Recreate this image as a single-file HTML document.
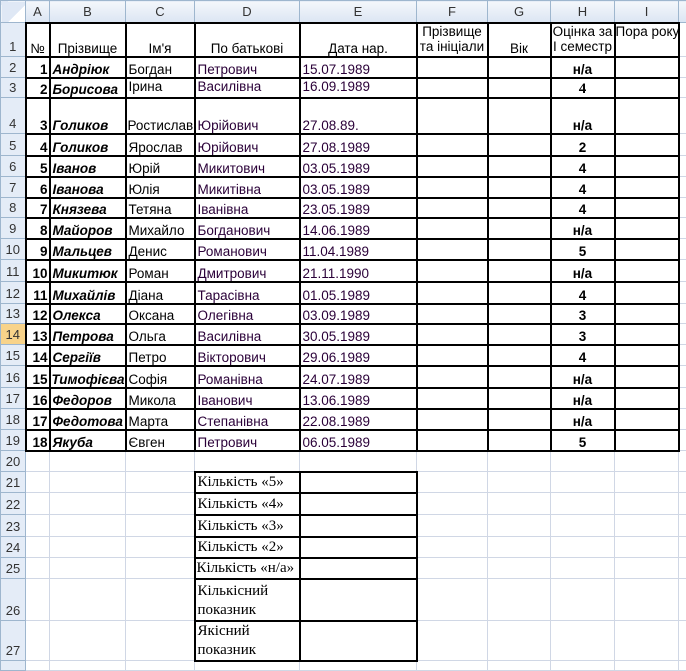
<!DOCTYPE html>
<html><head><meta charset="utf-8">
<style>
html,body{margin:0;padding:0;background:#fff;width:686px;height:664px;overflow:hidden}
table{border-collapse:collapse;table-layout:fixed;width:698px;font-family:"Liberation Sans",Arial,sans-serif;font-size:13.5px;color:#000;position:absolute;left:0;top:0}
td{border:1px solid #d0d7e5;padding:0 2px;white-space:nowrap;overflow:hidden;vertical-align:bottom;line-height:15px}
.ch{background:linear-gradient(#f4f7fb,#dbe5f3);border:1px solid #9eb6ce;text-align:center;vertical-align:middle;color:#333;font-size:13px}
.rh{background:#e4ecf7;border:1px solid #9eb6ce;text-align:center;color:#333;vertical-align:bottom;padding:0 0 2px 0;font-size:13px}
.sel{background:#f8d38a;color:#333}
.t{border:2px solid #000}
.n{text-align:right;font-weight:bold;font-size:13.5px;padding-right:1px}
.s{font-weight:bold;font-style:italic;font-size:13.5px}
.d{color:#2a0038}
.c{text-align:center}
.h{text-align:center;font-weight:bold;font-size:13.5px}
.top{vertical-align:top}
.tm{font-family:"Liberation Serif","Times New Roman",serif;font-size:15px;line-height:19px}
</style></head><body>
<table>
<colgroup>
<col style="width:25px"><col style="width:24px"><col style="width:76px"><col style="width:69px"><col style="width:105px"><col style="width:117px"><col style="width:71px"><col style="width:63px"><col style="width:64px"><col style="width:64px"><col style="width:20px">
</colgroup>
<tr style="height:22px"><td class="ch" style="background:linear-gradient(135deg,#dfe8f5 60%,#fff 61%)"></td><td class="ch">A</td><td class="ch">B</td><td class="ch">C</td><td class="ch">D</td><td class="ch">E</td><td class="ch">F</td><td class="ch">G</td><td class="ch">H</td><td class="ch">I</td><td class="ch"></td></tr>
<tr style="height:34px"><td class="rh">1</td><td class="t c" style="padding:0">№</td><td class="t c">Прізвище</td><td class="t c">Ім'я</td><td class="t c">По батькові</td><td class="t c">Дата нар.</td><td class="t c top" style="white-space:normal">Прізвище та ініціали</td><td class="t c">Вік</td><td class="t c top" style="white-space:normal;padding:0">Оцінка за І семестр</td><td class="t c top" style="padding:0">Пора року</td><td></td></tr>
<tr style="height:21px"><td class="rh">2</td><td class="t n">1</td><td class="t s">Андріюк</td><td class="t">Богдан</td><td class="t d">Петрович</td><td class="t d">15.07.1989</td><td class="t"></td><td class="t"></td><td class="t h">н/а</td><td class="t"></td><td></td></tr>
<tr style="height:20px"><td class="rh">3</td><td class="t n">2</td><td class="t s">Борисова</td><td class="t top">Ірина</td><td class="t d top">Василівна</td><td class="t d top">16.09.1989</td><td class="t"></td><td class="t"></td><td class="t h" style="font-family:'Liberation Serif',serif;font-size:15px">4</td><td class="t"></td><td></td></tr>
<tr style="height:36px"><td class="rh">4</td><td class="t n">3</td><td class="t s">Голиков</td><td class="t" style="padding:0 0 0 1px">Ростислав</td><td class="t d">Юрійович</td><td class="t d">27.08.89.</td><td class="t"></td><td class="t"></td><td class="t h">н/а</td><td class="t"></td><td></td></tr>
<tr style="height:22px"><td class="rh">5</td><td class="t n">4</td><td class="t s">Голиков</td><td class="t">Ярослав</td><td class="t d">Юрійович</td><td class="t d">27.08.1989</td><td class="t"></td><td class="t"></td><td class="t h">2</td><td class="t"></td><td></td></tr>
<tr style="height:21px"><td class="rh">6</td><td class="t n">5</td><td class="t s">Іванов</td><td class="t">Юрій</td><td class="t d">Микитович</td><td class="t d">03.05.1989</td><td class="t"></td><td class="t"></td><td class="t h">4</td><td class="t"></td><td></td></tr>
<tr style="height:21px"><td class="rh">7</td><td class="t n">6</td><td class="t s">Іванова</td><td class="t">Юлія</td><td class="t d">Микитівна</td><td class="t d">03.05.1989</td><td class="t"></td><td class="t"></td><td class="t h">4</td><td class="t"></td><td></td></tr>
<tr style="height:20px"><td class="rh">8</td><td class="t n">7</td><td class="t s">Князева</td><td class="t">Тетяна</td><td class="t d">Іванівна</td><td class="t d">23.05.1989</td><td class="t"></td><td class="t"></td><td class="t h">4</td><td class="t"></td><td></td></tr>
<tr style="height:21px"><td class="rh">9</td><td class="t n">8</td><td class="t s">Майоров</td><td class="t">Михайло</td><td class="t d">Богданович</td><td class="t d">14.06.1989</td><td class="t"></td><td class="t"></td><td class="t h">н/а</td><td class="t"></td><td></td></tr>
<tr style="height:21px"><td class="rh">10</td><td class="t n">9</td><td class="t s">Мальцев</td><td class="t">Денис</td><td class="t d">Романович</td><td class="t d">11.04.1989</td><td class="t"></td><td class="t"></td><td class="t h">5</td><td class="t"></td><td></td></tr>
<tr style="height:22px"><td class="rh">11</td><td class="t n">10</td><td class="t s">Микитюк</td><td class="t">Роман</td><td class="t d">Дмитрович</td><td class="t d">21.11.1990</td><td class="t"></td><td class="t"></td><td class="t h">н/а</td><td class="t"></td><td></td></tr>
<tr style="height:22px"><td class="rh">12</td><td class="t n">11</td><td class="t s">Михайлів</td><td class="t">Діана</td><td class="t d">Тарасівна</td><td class="t d">01.05.1989</td><td class="t"></td><td class="t"></td><td class="t h">4</td><td class="t"></td><td></td></tr>
<tr style="height:20px"><td class="rh">13</td><td class="t n">12</td><td class="t s">Олекса</td><td class="t">Оксана</td><td class="t d">Олегівна</td><td class="t d">03.09.1989</td><td class="t"></td><td class="t"></td><td class="t h">3</td><td class="t"></td><td></td></tr>
<tr style="height:21px"><td class="rh sel">14</td><td class="t n">13</td><td class="t s">Петрова</td><td class="t">Ольга</td><td class="t d">Василівна</td><td class="t d">30.05.1989</td><td class="t"></td><td class="t"></td><td class="t h">3</td><td class="t"></td><td></td></tr>
<tr style="height:21px"><td class="rh">15</td><td class="t n">14</td><td class="t s">Сергіїв</td><td class="t">Петро</td><td class="t d">Вікторович</td><td class="t d">29.06.1989</td><td class="t"></td><td class="t"></td><td class="t h">4</td><td class="t"></td><td></td></tr>
<tr style="height:22px"><td class="rh">16</td><td class="t n">15</td><td class="t s" style="padding:0 0 0 1px">Тимофієва</td><td class="t">Софія</td><td class="t d">Романівна</td><td class="t d">24.07.1989</td><td class="t"></td><td class="t"></td><td class="t h">н/а</td><td class="t"></td><td></td></tr>
<tr style="height:21px"><td class="rh">17</td><td class="t n">16</td><td class="t s">Федоров</td><td class="t">Микола</td><td class="t d">Іванович</td><td class="t d">13.06.1989</td><td class="t"></td><td class="t"></td><td class="t h">н/а</td><td class="t"></td><td></td></tr>
<tr style="height:21px"><td class="rh">18</td><td class="t n">17</td><td class="t s">Федотова</td><td class="t">Марта</td><td class="t d">Степанівна</td><td class="t d">22.08.1989</td><td class="t"></td><td class="t"></td><td class="t h">н/а</td><td class="t"></td><td></td></tr>
<tr style="height:21px"><td class="rh">19</td><td class="t n">18</td><td class="t s">Якуба</td><td class="t">Євген</td><td class="t d">Петрович</td><td class="t d">06.05.1989</td><td class="t"></td><td class="t"></td><td class="t h">5</td><td class="t"></td><td></td></tr>
<tr style="height:21px"><td class="rh">20</td><td></td><td></td><td></td><td></td><td></td><td></td><td></td><td></td><td></td><td></td></tr>
<tr style="height:20px"><td class="rh">21</td><td></td><td></td><td></td><td class="t tm">Кількість «5»</td><td class="t"></td><td></td><td></td><td></td><td></td><td></td></tr>
<tr style="height:22px"><td class="rh">22</td><td></td><td></td><td></td><td class="t tm">Кількість «4»</td><td class="t"></td><td></td><td></td><td></td><td></td><td></td></tr>
<tr style="height:22px"><td class="rh">23</td><td></td><td></td><td></td><td class="t tm">Кількість «3»</td><td class="t"></td><td></td><td></td><td></td><td></td><td></td></tr>
<tr style="height:20px"><td class="rh">24</td><td></td><td></td><td></td><td class="t tm">Кількість «2»</td><td class="t"></td><td></td><td></td><td></td><td></td><td></td></tr>
<tr style="height:19px"><td class="rh">25</td><td></td><td></td><td></td><td class="t tm" style="padding:0 0 0 1px">Кількість «н/а»</td><td class="t"></td><td></td><td></td><td></td><td></td><td></td></tr>
<tr style="height:42px"><td class="rh">26</td><td></td><td></td><td></td><td class="t tm" style="white-space:normal">Кількісний показник</td><td class="t"></td><td></td><td></td><td></td><td></td><td></td></tr>
<tr style="height:40px"><td class="rh">27</td><td></td><td></td><td></td><td class="t tm" style="white-space:normal">Якісний показник</td><td class="t"></td><td></td><td></td><td></td><td></td><td></td></tr>
<tr style="height:10px"><td class="rh"></td><td></td><td></td><td></td><td></td><td></td><td></td><td></td><td></td><td></td><td></td></tr>
</table>
</body></html>
